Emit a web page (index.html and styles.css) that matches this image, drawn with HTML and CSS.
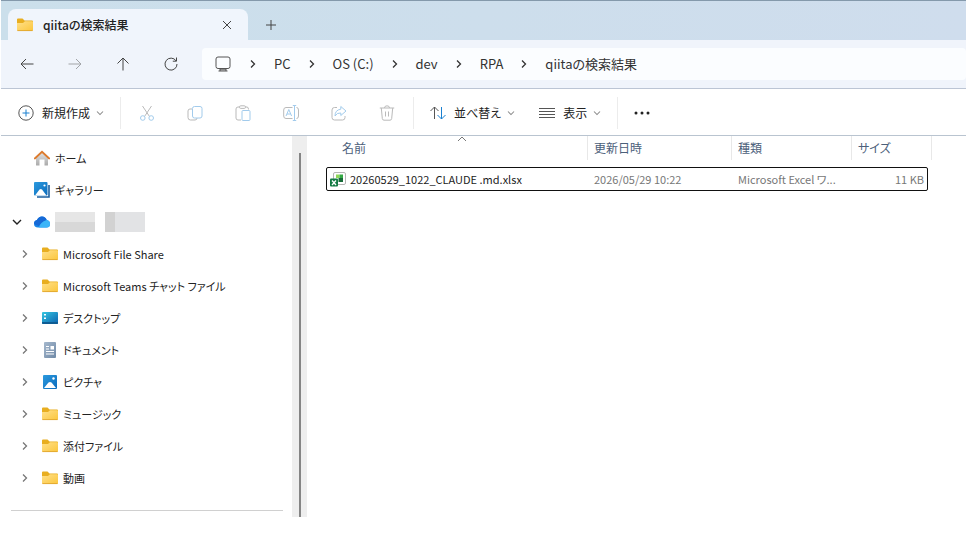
FILE: index.html
```html
<!DOCTYPE html>
<html lang="ja">
<head>
<meta charset="utf-8">
<title>qiitaの検索結果</title>
<link rel="stylesheet" href="styles.css">
</head>
<body>

<svg class="defs" aria-hidden="true">
  <defs>
    <linearGradient id="gFolder" x1="0" y1="0" x2="1" y2="1">
      <stop offset="0" stop-color="#ffe08a"/><stop offset="1" stop-color="#fbc63c"/>
    </linearGradient>
    <linearGradient id="gBlue" x1="0" y1="0" x2="1" y2="1">
      <stop offset="0" stop-color="#2c9ade"/><stop offset="1" stop-color="#0b6bbd"/>
    </linearGradient>
    <linearGradient id="gDesk" x1="0" y1="0" x2="1" y2="1">
      <stop offset="0" stop-color="#35c6e0"/><stop offset="1" stop-color="#0c62b0"/>
    </linearGradient>
    <linearGradient id="gDoc" x1="0" y1="0" x2="1" y2="1">
      <stop offset="0" stop-color="#a5b8cd"/><stop offset="1" stop-color="#6f89a6"/>
    </linearGradient>
    <linearGradient id="gHome" x1="0" y1="0" x2="0" y2="1">
      <stop offset="0" stop-color="#e4e4e4"/><stop offset="1" stop-color="#aaa"/>
    </linearGradient>
    <symbol id="folder" viewBox="0 0 16 16">
      <path d="M0 2.5Q0 1.5 1 1.5H5.5L7.500 3.500H15Q16 3.500 16 4.500V8H0Z" fill="#e8ae20"/>
      <path d="M0 6H6L8 4.300H15Q16 4.300 16 5.300V13Q16 14 15 14H1Q0 14 0 13Z" fill="url(#gFolder)"/>
      <path d="M.4 13.6H15.6" stroke="#dca02a" stroke-width=".8"/>
    </symbol>
    <symbol id="chev" viewBox="0 0 8 10">
      <path d="M2 1.500L5.500 5L2 8.500" fill="none" stroke="currentColor" stroke-width="1.3"/>
    </symbol>
    <symbol id="down" viewBox="0 0 10 8">
      <path d="M1 2L5 6L9 2" fill="none" stroke="currentColor" stroke-width="1.4"/>
    </symbol>
  </defs>
</svg>

<div class="explorer">
  <header class="titlebar">
    <div class="tab">
      <svg class="ico"><use href="#folder"/></svg>
      <h1 class="tab-title">qiitaの検索結果</h1>
      <button class="tab-btn" aria-label="タブを閉じる">
        <svg width="10" height="10" viewBox="0 0 10 10"><path d="M1 1L9 9M9 1L1 9"/></svg>
      </button>
    </div>
    <button class="tab-btn new-tab" aria-label="新しいタブ">
      <svg width="10" height="10" viewBox="0 0 10 10"><path d="M5 0V10M0 5H10"/></svg>
    </button>
  </header>

  <div class="navbar">
    <div class="nav-buttons">
      <button aria-label="戻る"><svg class="ico" viewBox="0 0 16 16"><path d="M14.500 8H2M7 3L2 8L7 13"/></svg></button>
      <button aria-label="進む" disabled><svg class="ico" viewBox="0 0 16 16"><path d="M1.500 8H14M9 3L14 8L9 13"/></svg></button>
      <button aria-label="上へ"><svg class="ico" viewBox="0 0 16 16"><path d="M8 14.500V2M2.500 7.500L8 2L13.500 7.500"/></svg></button>
      <button aria-label="更新"><svg class="ico" viewBox="0 0 16 16"><path d="M13 4.800A6 6 0 1 0 14 8M13.500 1.500V5.200H9.800"/></svg></button>
    </div>
    <nav class="crumbs" aria-label="アドレス">
      <svg class="pc" viewBox="0 0 16 16"><rect x="1" y="1" width="14" height="11.500" rx="2"/><path d="M5 12.500V15M11 12.500V15M3.500 15H12.500M5 13.800H11"/></svg>
      <svg class="sep"><use href="#chev"/></svg>
      <a href="#">PC</a>
      <svg class="sep"><use href="#chev"/></svg>
      <a href="#">OS (C:)</a>
      <svg class="sep"><use href="#chev"/></svg>
      <a href="#">dev</a>
      <svg class="sep"><use href="#chev"/></svg>
      <a href="#">RPA</a>
      <svg class="sep"><use href="#chev"/></svg>
      <a href="#">qiitaの検索結果</a>
    </nav>
  </div>

  <div class="toolbar">
    <div class="group">
      <button class="cmd">
        <svg class="ico" viewBox="0 0 16 16"><circle cx="8" cy="8" r="7.200"/><path class="accent" d="M8 4.500V11.500M4.500 8H11.500"/></svg>
        新規作成
        <svg class="drop"><use href="#down"/></svg>
      </button>
    </div>
    <div class="group icons">
      <button aria-label="切り取り" disabled><svg class="ico" viewBox="0 0 16 16"><path d="M3.500 1L10.500 11.500M12.500 1L5.500 11.500"/><g class="accent"><circle cx="3.800" cy="13" r="2.300"/><circle cx="12.200" cy="13" r="2.300"/></g></svg></button>
      <button aria-label="コピー" disabled><svg class="ico" viewBox="0 0 16 16"><path d="M5 4H3Q1 4 1 6V12.500Q1 15 3.500 15H8Q10 15 10 13"/><rect class="accent" x="5.500" y="1.500" width="9.500" height="11.500" rx="2"/></svg></button>
      <button aria-label="貼り付け" disabled><svg class="ico" viewBox="0 0 16 16"><path d="M4.500 2H3Q1 2 1 4V13Q1 15 3 15H6M10.500 2H12Q13.500 2 13.500 4.500"/><rect x="4.500" y=".800" width="6" height="2.600" rx="1.200"/><rect class="accent" x="7" y="5.500" width="8" height="10" rx="1"/></svg></button>
      <button aria-label="名前の変更" disabled><svg class="ico" viewBox="0 0 16 16"><path d="M9.500 2.500H3Q.700 2.500 .700 5V11Q.700 13.500 3 13.500H9.500M13.500 2.500Q15.500 2.500 15.500 5V11Q15.500 13.500 13.500 13.500"/><path class="accent" d="M11.500 .500V15.500M9.800 .500H13.200M9.800 15.500H13.200M3 11L5.800 4.500L8.600 11M4 9H7.600"/></svg></button>
      <button aria-label="共有" disabled><svg class="ico" viewBox="0 0 16 16"><path d="M6 2.500H3.500Q1 2.500 1 5V12.500Q1 15 3.500 15H11.500Q14 15 14 12.500V11"/><path class="accent" d="M9.800 1.500L15 6L9.800 10.500V8Q6 7.500 4 11Q4 5 9.800 4.200Z"/></svg></button>
      <button aria-label="削除" disabled><svg class="ico" viewBox="0 0 16 16"><path d="M.800 3H15.200M5.500 3Q5.500 .800 8 .800Q10.500 .800 10.500 3M2.300 3L3.300 13.500Q3.500 15.200 5 15.200H11Q12.500 15.200 12.700 13.500L13.700 3M6.500 6.500V11.500M9.500 6.500V11.500"/></svg></button>
    </div>
    <div class="group">
      <button class="cmd sort">
        <svg class="ico" viewBox="0 0 16 16"><path d="M4.500 14V2M.500 6L4.500 2L8.500 6"/><path class="accent" d="M11.500 2V14M7.500 10L11.500 14L15.500 10"/></svg>
        並べ替え
        <svg class="drop"><use href="#down"/></svg>
      </button>
      <button class="cmd">
        <svg class="ico" viewBox="0 0 16 16"><path d="M0 3.500H16M0 6.500H16M0 9.500H16M0 12.500H16"/></svg>
        表示
        <svg class="drop"><use href="#down"/></svg>
      </button>
    </div>
    <button class="more" aria-label="その他"><svg class="ico" viewBox="0 0 16 16"><circle cx="2" cy="8" r="1.500"/><circle cx="8" cy="8" r="1.500"/><circle cx="14" cy="8" r="1.500"/></svg></button>
  </div>

  <div class="content">
    <nav class="sidebar" aria-label="ナビゲーション">
      <ul class="tree">
        <li>
          <a href="#"><svg class="ico" viewBox="0 0 16 16"><path d="M2 7L8 2L14 7V15Q14 15.500 13.500 15.500H10.500V9.500H5.500V15.500H2.500Q2 15.500 2 15Z" fill="url(#gHome)"/><path d="M.800 8.500L8 1.800L15.200 8.500" fill="none" stroke="#dd7a2c" stroke-width="1.800" stroke-linecap="round"/></svg>ホーム</a>
        </li>
        <li>
          <a href="#"><svg class="ico" viewBox="0 0 16 16"><path d="M15 3V15H3" fill="none" stroke="#1b5fa0" stroke-width="1.600"/><rect width="13.500" height="13.500" rx="1" fill="url(#gBlue)"/><path d="M1 13.500L5.500 7.500Q6.700 6.500 8 7.500L12.500 13.500Z" fill="#fff"/><circle cx="10.500" cy="3.500" r="1.100" fill="#fff"/></svg>ギャラリー</a>
        </li>
        <li>
          <button class="twist open" aria-label="折りたたむ"><svg class="down"><use href="#down"/></svg></button>
          <a href="#" aria-label="OneDrive"><svg class="ico" viewBox="0 0 16 16"><path d="M4 13.500Q0 13.500 0 9.700Q0 6.500 3 6Q4.500 2.500 8 2.500Q11.500 2.500 12.700 6Q16 6.500 16 10Q16 13.500 12.500 13.500Z" fill="#1787ea"/><path d="M3 6Q4.500 2.500 8 2.500Q11.500 2.500 12.700 6L5 12Q1 11 0 9.700Q0 6.500 3 6Z" fill="#1669d6"/><path d="M5 13.500Q6 8 12.700 6Q16 6.500 16 10Q16 13.500 12.500 13.500Z" fill="#3bb5f8"/></svg><span class="masked"><i></i><i></i></span></a>
        </li>
        <li class="child">
          <button class="twist" aria-label="展開"><svg class="sep"><use href="#chev"/></svg></button>
          <a href="#"><svg class="ico"><use href="#folder"/></svg>Microsoft File Share</a>
        </li>
        <li class="child">
          <button class="twist" aria-label="展開"><svg class="sep"><use href="#chev"/></svg></button>
          <a href="#"><svg class="ico"><use href="#folder"/></svg>Microsoft Teams チャット ファイル</a>
        </li>
        <li class="child">
          <button class="twist" aria-label="展開"><svg class="sep"><use href="#chev"/></svg></button>
          <a href="#"><svg class="ico" viewBox="0 0 16 16"><rect y="2" width="16" height="12" rx="1" fill="url(#gDesk)"/><path d="M2 4H4V5.500H2ZM2 7.500H4V9H2Z" fill="#fff"/><path d="M0 12H16V13Q16 14 15 14H1Q0 14 0 13Z" fill="#0e5c93"/></svg>デスクトップ</a>
        </li>
        <li class="child">
          <button class="twist" aria-label="展開"><svg class="sep"><use href="#chev"/></svg></button>
          <a href="#"><svg class="ico" viewBox="0 0 16 16"><rect x="2" width="12" height="16" rx="1" fill="url(#gDoc)"/><path d="M4 4.500H7M4 7H7M4 9.500H12M4 12H12" stroke="#fff"/><rect x="8.500" y="4" width="3.500" height="3.500" fill="#fff"/></svg>ドキュメント</a>
        </li>
        <li class="child">
          <button class="twist" aria-label="展開"><svg class="sep"><use href="#chev"/></svg></button>
          <a href="#"><svg class="ico" viewBox="0 0 16 16"><rect x="1" y="1" width="14" height="14" rx="1" fill="url(#gBlue)"/><path d="M2 14L6.500 8.500Q8 7.300 9.500 8.500L14 14Z" fill="#fff"/><circle cx="11.500" cy="4.500" r="1.200" fill="#fff"/></svg>ピクチャ</a>
        </li>
        <li class="child">
          <button class="twist" aria-label="展開"><svg class="sep"><use href="#chev"/></svg></button>
          <a href="#"><svg class="ico"><use href="#folder"/></svg>ミュージック</a>
        </li>
        <li class="child">
          <button class="twist" aria-label="展開"><svg class="sep"><use href="#chev"/></svg></button>
          <a href="#"><svg class="ico"><use href="#folder"/></svg>添付ファイル</a>
        </li>
        <li class="child">
          <button class="twist" aria-label="展開"><svg class="sep"><use href="#chev"/></svg></button>
          <a href="#"><svg class="ico"><use href="#folder"/></svg>動画</a>
        </li>
      </ul>
      <hr>
    </nav>
    <div class="scrollbar"><div class="thumb"></div></div>

    <main class="files">
      <table>
        <colgroup><col class="c-name"><col class="c-date"><col class="c-type"><col class="c-size"></colgroup>
        <thead>
          <tr>
            <th aria-sort="ascending">名前<span class="sorted"><svg width="10" height="6" viewBox="0 0 10 6"><path d="M1 5L5 1L9 5"/></svg></span></th>
            <th>更新日時</th>
            <th>種類</th>
            <th>サイズ</th>
          </tr>
        </thead>
        <tbody>
          <tr class="focused">
            <td><div class="file"><svg class="ico" viewBox="0 0 16 16"><rect x="3.500" y="1.500" width="12" height="12" rx="1.500" fill="#fff" stroke="#b5b5b5"/><path d="M6 3.500H9.500V7H6Z" fill="#8fd858"/><path d="M9.500 3.500H13V7H9.500Z" fill="#35a845"/><path d="M8.500 7H13V11H8.500Z" fill="#176b38"/><rect y="7.500" width="8" height="8" rx="1" fill="#137a43"/><path d="M2 9.500L6 14M6 9.500L2 14" stroke="#fff" stroke-width="1.300"/></svg>20260529_1022_CLAUDE .md.xlsx</div></td>
            <td>2026/05/29 10:22</td>
            <td>Microsoft Excel ワ...</td>
            <td class="num">11 KB</td>
          </tr>
        </tbody>
      </table>
    </main>
  </div>
</div>

</body>
</html>
```
FILE: styles.css
```css
* {
  box-sizing: border-box;
}

body {
  margin: 0;
  background: #fff;
  color: #222;
  font-family: "Noto Sans CJK JP", sans-serif;
  font-size: 12px;
  font-feature-settings: "palt";
  line-height: 20px;
}

a {
  color: inherit;
  text-decoration: none;
}

button {
  display: flex;
  align-items: center;
  justify-content: center;
  padding: 0;
  border: 0;
  background: none;
  color: inherit;
  font: inherit;
  font-feature-settings: inherit;
}

svg {
  flex: none;
}

.defs {
  position: absolute;
  width: 0;
  height: 0;
}

.ico {
  width: 16px;
  height: 16px;
}

.sep {
  width: 8px;
  height: 10px;
}

.explorer {
  margin-left: 1px;
}

/* title bar */
.titlebar {
  display: flex;
  align-items: flex-end;
  height: 40px;
  padding-left: 7px;
  border-top: 1px solid #8499ab;
  background: linear-gradient(to right, #cbdfeb, #cfdded);
}

.tab {
  display: flex;
  align-items: center;
  width: 240px;
  height: 31px;
  padding: 0 11px 0 9px;
  border-radius: 8px 8px 0 0;
  background: #f0f5fc;
}

.tab-title {
  flex: 1;
  margin: 0 0 0 10px;
  font-size: 12px;
  font-weight: 500;
}

.tab-btn {
  width: 20px;
  height: 31px;
}

.tab-btn svg {
  fill: none;
  stroke: #444;
}

.new-tab {
  margin-left: 13px;
}

/* address row */
.navbar {
  display: flex;
  height: 49px;
  padding: 8px 0;
  border-bottom: 1px solid #bcc5d4;
  background: #f0f4fb;
}

.nav-buttons {
  display: flex;
  align-items: center;
  gap: 32px;
  width: 201px;
  padding-left: 18px;
}

.nav-buttons svg {
  fill: none;
  stroke: #444;
}

.nav-buttons button:disabled {
  opacity: .45;
}

.crumbs {
  display: flex;
  flex: 1;
  align-items: center;
  gap: 17px;
  padding-left: 12px;
  border-radius: 4px;
  background: #fbfdff;
  color: #333;
  font-size: 13px;
}

.crumbs .pc {
  width: 18px;
  height: 16px;
  fill: none;
  stroke: #555;
}

/* command bar */
.toolbar {
  display: flex;
  align-items: center;
  height: 47px;
  padding: 2px 0 0 17px;
  border-bottom: 1px solid #b9c4d0;
}

.group {
  display: flex;
  align-items: center;
  gap: 24px;
  height: 32px;
  padding-right: 16px;
  border-right: 1px solid #ececec;
}

.icons {
  gap: 32px;
  padding: 0 18px;
}

.toolbar .ico {
  fill: none;
  stroke: #555;
}

.toolbar .ico .accent {
  stroke: #1a80d0;
}

.toolbar button:disabled {
  opacity: .4;
}

.cmd {
  gap: 8px;
}

.sort {
  padding-left: 16px;
}

.drop {
  width: 8px;
  height: 6px;
  color: #888;
}

.cmd .drop {
  margin-left: -2px;
}

.more {
  margin-left: 16px;
}

.toolbar .more .ico {
  fill: #222;
  stroke: none;
}

/* panes */
.content {
  display: flex;
}

.sidebar {
  flex: none;
  width: 291px;
  padding: 6px 9px 6px 10px;
}

.tree {
  margin: 0;
  padding: 0;
  font-size: 11px;
  list-style: none;
}

.tree li {
  display: flex;
  align-items: center;
  height: 32px;
  padding-left: 23px;
}

.tree li.child,
.tree li:has(.open) {
  padding-left: 0;
}

.tree a {
  display: flex;
  align-items: center;
  gap: 5px;
}

.twist {
  width: 23px;
  height: 32px;
  padding-right: 11px;
  color: #777;
}

.child .twist {
  width: 31px;
  padding-right: 3px;
}

.open {
  color: #222;
}

.down {
  width: 10px;
  height: 8px;
}

.masked {
  display: flex;
  gap: 10px;
}

.masked i {
  width: 40px;
  height: 20px;
  background: linear-gradient(to bottom, #e6e6e6 50%, #d8d8d8 50%);
}

.masked i + i {
  background: linear-gradient(to right, #d2d2d2 25%, #e2e3e5 25%);
}

.sidebar hr {
  height: 1px;
  margin: 16px 0 0;
  border: 0;
  background: #d0d0d0;
}

.scrollbar {
  display: flex;
  flex: none;
  justify-content: center;
  width: 15px;
  padding-top: 17px;
  background: #eee;
}

.thumb {
  width: 2px;
  background: #858585;
}

/* file list */
.files {
  flex: 1;
  min-width: 0;
  padding-left: 19px;
}

.files table {
  width: 606px;
  border-collapse: separate;
  border-spacing: 0;
  table-layout: fixed;
}

.c-name {
  width: 262px;
}

.c-date {
  width: 144px;
}

.c-type {
  width: 120px;
}

.c-size {
  width: 80px;
}

.files th {
  position: relative;
  height: 24px;
  padding: 0 6px;
  border-right: 1px solid #e8e8e8;
  color: #4c607a;
  font-weight: 400;
  text-align: left;
}

.files th:first-child {
  padding-left: 16px;
}

.sorted {
  position: absolute;
  top: 0;
  right: 0;
  left: 10px;
  display: flex;
  justify-content: center;
}

.sorted svg {
  fill: none;
  stroke: #777;
}

.files tbody::before {
  display: block;
  height: 7px;
  content: "";
}

.focused {
  position: relative;
}

.focused::after {
  position: absolute;
  inset: 0 4px 0 0;
  border: 1px solid #111;
  border-radius: 2px;
  content: "";
}

.files td {
  height: 24px;
  padding: 0 6px;
  color: #777;
  font-size: 11px;
  white-space: nowrap;
}

.files td:first-child {
  padding-left: 4px;
  color: #222;
}

.files td.num {
  padding-right: 8px;
  text-align: right;
}

.file {
  display: flex;
  align-items: center;
  gap: 4px;
}
```
